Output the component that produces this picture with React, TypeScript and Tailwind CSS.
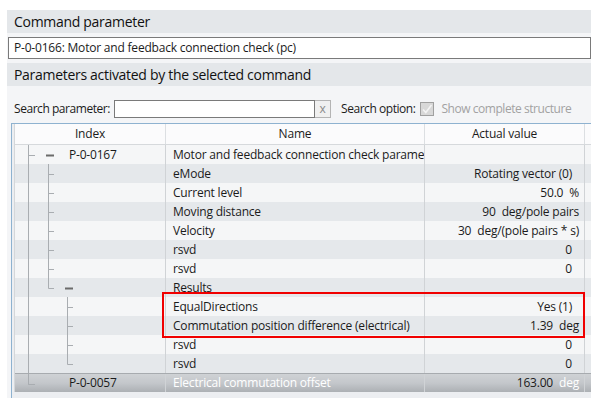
import React from "react"

type Row = {
  index?: string
  name: string
  value?: string
  unit?: string
  tree: string
  selected?: boolean
}

// tree codes: drawn per row as small svg strokes
const rows: Row[] = [
  { index: "P-0-0167", name: "Motor and feedback connection check parameters", tree: "root" },
  { name: "eMode", value: "Rotating vector (0)", tree: "c1" },
  { name: "Current level", value: "50.0", unit: "%", tree: "c1" },
  { name: "Moving distance", value: "90", unit: "deg/pole pairs", tree: "c1" },
  { name: "Velocity", value: "30", unit: "deg/(pole pairs * s)", tree: "c1" },
  { name: "rsvd", value: "0", tree: "c1" },
  { name: "rsvd", value: "0", tree: "c1" },
  { name: "Results", tree: "c1last" },
  { name: "EqualDirections", value: "Yes (1)", tree: "c2" },
  { name: "Commutation position difference (electrical)", value: "1.39", unit: "deg", tree: "c2" },
  { name: "rsvd", value: "0", tree: "c2" },
  { name: "rsvd", value: "0", tree: "c2last" },
  { index: "P-0-0057", name: "Electrical commutation offset", value: "163.00", unit: "deg", tree: "last", selected: true },
]

function TreeLines({ kind }: { kind: string }) {
  const c = "#a9adb1"
  return (
    <svg className="absolute left-0 top-0" width="80" height="19" viewBox="0 0 80 19">
      {kind === "last" ? (
        <path d="M13.5 0V10.5H20" stroke={c} fill="none" />
      ) : (
        <path d="M13.5 0V19" stroke={c} fill="none" />
      )}
      {(kind === "root" || kind === "last") && <path d="M13.5 10.5H20" stroke={c} />}
      {kind === "root" && <rect x="31" y="9.5" width="8" height="2" fill="#6b6b6b" />}
      {kind === "c1" && <path d="M33.5 0V19M33.5 10.5H39" stroke={c} fill="none" />}
      {kind === "c1last" && (
        <>
          <path d="M33.5 0V10.5H39" stroke={c} fill="none" />
          <rect x="50" y="9.5" width="8" height="2" fill="#6b6b6b" />
        </>
      )}
      {kind === "c2" && <path d="M52.5 0V19M52.5 10.5H58" stroke={c} fill="none" />}
      {kind === "c2last" && <path d="M52.5 0V10.5H58" stroke={c} fill="none" />}
    </svg>
  )
}

export default function App() {
  return (
    <div className="h-[398px] w-[591px] overflow-hidden bg-white pl-[7px] pt-[10px] font-['Segoe_UI','Open_Sans',sans-serif] text-[12px] tracking-[-0.2px] text-[#1b1b1b]">
      <div className="flex h-full flex-col bg-[#f4f5f7]">
        {/* Command parameter */}
        <div className="flex h-[23px] shrink-0 items-center bg-[#e4e7ea] pl-[7px] text-[14px] tracking-[-0.3px] text-[#111]">
          Command parameter
        </div>
        <div className="ml-px mt-[4px] flex h-[22px] shrink-0 items-center border border-[#7a7a7a] bg-white pl-[5px]">
          P-0-0166: Motor and feedback connection check (pc)
        </div>

        {/* Activated parameters */}
        <div className="mt-[4px] flex h-[23px] shrink-0 items-center bg-[#e4e7ea] pl-[7px] text-[14px] tracking-[-0.3px] text-[#111]">
          Parameters activated by the selected command
        </div>

        {/* Search row */}
        <div className="mt-[14px] flex h-[18px] shrink-0 items-center pl-[7px] tracking-[-0.45px]">
          <span className="w-[100px] whitespace-nowrap">Search parameter:</span>
          <div className="h-[18px] w-[201px] border border-[#7a7a7a] bg-white" />
          <div className="flex h-[18px] w-[16px] items-center justify-center border border-l-0 border-[#b4b4b4] bg-[#f0f0f0] pb-px text-[12px] text-[#8a8a8a]">
            x
          </div>
          <span className="ml-[10px]">Search option:</span>
          <div className="ml-[5px] flex h-[14px] w-[14px] items-center justify-center border border-[#a0a0a0] bg-[#d8d8d8]">
            <svg width="12" height="12" viewBox="0 0 12 12">
              <path d="M2 6.5L4.8 9.5L10.5 2" stroke="#f4f4f4" strokeWidth="1.6" fill="none" />
            </svg>
          </div>
          <span className="ml-[7px] text-[#a2a2a2]">Show complete structure</span>
        </div>

        {/* Table */}
        <div className="relative ml-[4px] mt-[5px] flex-1 border-l border-t border-[#8eb2d0] bg-[#eceef1] pl-[2px]">
          <div className="flex flex-col border-l border-[#d4d7da]">
            <div className="flex h-[21px] items-center border-b border-[#d6d9dc] bg-[#fbfbfc]">
              <div className="w-[150px] text-center">Index</div>
              <div className="h-full w-px bg-[#dcdfe2]" />
              <div className="w-[258px] text-center">Name</div>
              <div className="h-full w-px bg-[#dcdfe2]" />
              <div className="w-[159px] text-center">Actual value</div>
              <div className="h-full w-px bg-[#dcdfe2]" />
              <div className="flex-1" />
            </div>
            {rows.map((r, i) => (
              <div
                key={i}
                className={
                  r.selected
                    ? "flex h-[19px] items-center border-t border-[#a7abaf] bg-gradient-to-b from-[#cfd2d5] via-[#c4c7cb] to-[#acb0b4]"
                    : i % 2 === 0
                      ? "flex h-[19px] items-center bg-[#f5f6f7]"
                      : "flex h-[19px] items-center bg-[#e5e8eb]"
                }
              >
                <div className="relative flex h-full w-[150px] items-center pl-[54px]">
                  <TreeLines kind={r.tree} />
                  {r.index}
                </div>
                <div className="h-full w-px bg-[#d0d3d6]" />
                <div
                  className={
                    r.selected
                      ? "w-[258px] overflow-hidden whitespace-nowrap pl-[7px] text-white"
                      : "w-[258px] overflow-hidden whitespace-nowrap pl-[7px]"
                  }
                >
                  {r.name}
                </div>
                <div className="h-full w-px bg-[#d0d3d6]" />
                <div
                  className={
                    r.unit
                      ? "w-[159px] whitespace-nowrap pr-[5px] text-right"
                      : "w-[159px] whitespace-nowrap pr-[12px] text-right"
                  }
                >
                  {r.value}
                  {r.unit && (
                    <span className={r.selected ? "ml-[6px] text-white" : "ml-[6px]"}>{r.unit}</span>
                  )}
                </div>
                <div className="h-full w-px bg-[#d0d3d6]" />
                <div className="flex-1" />
              </div>
            ))}
          </div>
          {/* highlight box */}
          <div className="absolute left-[150px] top-[168px] h-[46px] w-[423px] border-2 border-[#f00000]" />
        </div>
      </div>
    </div>
  )
}
